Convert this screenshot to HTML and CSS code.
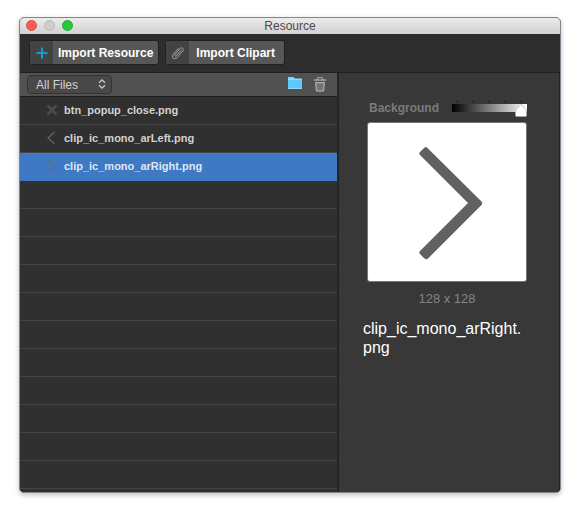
FILE: index.html
```html
<!DOCTYPE html>
<html lang="en">
<head>
<meta charset="utf-8">
<meta name="viewport" content="width=device-width, initial-scale=1">
<title>Resource</title>
<link rel="stylesheet" href="styles.css">
</head>
<body>
<main class="window">
  <header class="titlebar">
    <div class="lights">
      <button class="light close" type="button" aria-label="Close"></button>
      <button class="light minimize" type="button" aria-label="Minimize"></button>
      <button class="light expand" type="button" aria-label="Zoom"></button>
    </div>
    <h1 class="title">Resource</h1>
  </header>
  <div class="toolbar">
    <button class="import" type="button">
      <span class="import-icon"><svg width="12" height="12" viewBox="0 0 12 12" fill="none" stroke="#169bd0" stroke-width="2"><path d="M6 0.500V11.500M0.500 6H11.500"/></svg></span>
      <span class="import-label">Import Resource</span>
    </button>
    <button class="import" type="button">
      <span class="import-icon"><svg width="14" height="14" viewBox="0 0 14 14" fill="none" stroke="#a6a6a6" stroke-width="1" stroke-linecap="round"><path d="M10 4.500 5.200 9.800C4.200 10.800 3 9.600 3.900 8.600L9.200 2.600C10.800 0.800 13.300 2.900 11.800 4.900L6 11.600C3.300 14.300 0 11.500 2 8.600L7.500 2.200"/></svg></span>
      <span class="import-label">Import Clipart</span>
    </button>
  </div>
  <div class="content">
    <section class="files">
      <div class="filterbar">
        <div class="filter">
          <select aria-label="Filter files"><option>All Files</option></select>
          <svg class="arrows" width="8" height="10" viewBox="0 0 8 10" fill="none" stroke="#c8c8c8" stroke-width="1.300"><path d="M1 3.700 4 0.900 7 3.700M1 6.300 4 9.100 7 6.300"/></svg>
        </div>
        <div class="actions">
          <button class="action" type="button" aria-label="New folder">
            <svg width="16" height="14" viewBox="0 0 16 14"><path d="M1 0H6.500L8 1.500H15V12H1Z" fill="#7cd3ff"/><path d="M1 3H15V12H1Z" fill="#5fc8fa"/><path d="M1 2.500H15M1 11.500H15" stroke="#8edcff"/></svg>
          </button>
          <button class="action" type="button" aria-label="Delete">
            <svg width="14" height="15" viewBox="0 0 14 15" fill="none" stroke="#a8a8a8"><path d="M4.500 2.500V1Q4.500 0.500 5 0.500H9Q9.500 0.500 9.500 1V2.500"/><path d="M1 3H13" stroke-width="1.500"/><path d="M2 5H12L11 14.500H3Z" fill="#858585" stroke="none"/><path d="M2 5.500H12M2.500 5 3.500 14H10.500L11.500 5"/><path d="M5 7V13M7 7V13M9 7V13" stroke="#626262"/></svg>
          </button>
        </div>
      </div>
      <ul class="file-list">
        <li><button class="file" type="button">
          <svg class="file-icon" width="12" height="14" viewBox="0 0 12 14" fill="none" stroke="#4c4c4c" stroke-width="2.500"><path d="M1.500 2.500 10.500 11.500M10.500 2.500 1.500 11.500"/></svg>btn_popup_close.png</button></li>
        <li><button class="file" type="button">
          <svg class="file-icon" width="12" height="14" viewBox="0 0 12 14" fill="none" stroke="#666" stroke-width="1.200"><path d="M8.500 1 2 7 8.500 13"/></svg>clip_ic_mono_arLeft.png</button></li>
        <li><button class="file selected" type="button">
          <svg class="file-icon" width="12" height="14" viewBox="0 0 12 14" fill="none" stroke="#626b78" stroke-width="1.400"><path d="M2.500 1 9 7 2.500 13"/></svg>clip_ic_mono_arRight.png</button></li>
      </ul>
    </section>
    <aside class="preview">
      <div class="background-row">
        <label for="background">Background</label>
        <div class="slider">
          <div class="ticks" aria-hidden="true"><i></i><i></i><i></i><i></i><i></i></div>
          <input id="background" type="range" min="0" max="4" value="4">
          <svg class="thumb" width="12" height="13" viewBox="0 0 12 13"><path d="M6 0.500 11.500 6V11.500Q11.500 12.500 10.500 12.500H1.500Q0.500 12.500 0.500 11.500V6Z" fill="#fff" stroke="#aaa" stroke-width="0.700"/></svg>
        </div>
      </div>
      <div class="canvas">
        <svg viewBox="0 0 158 158" role="img" aria-label="Right arrow"><path d="M56.500 24.500 Q58 23.500 59.500 25 L113.500 78.500 Q115 80 113.500 82 L60 135.500 Q58 137 56.500 135.500 L52 131 Q50.500 129.500 52 128 L100 80 52 32 Q50.500 30.500 52 29Z" fill="#616161"/></svg>
      </div>
      <p class="dimensions">128 x 128</p>
      <h2 class="name">clip_ic_mono_arRight.<wbr>png</h2>
    </aside>
  </div>
</main>
</body>
</html>
```
FILE: styles.css
```css
* { box-sizing: border-box; }

body {
  margin: 0;
  padding: 17px 19px;
  min-height: 100vh;
  display: flex;
  background: #fff;
  color: #e0e0e0;
  font: 12px/16px "Liberation Sans", Arial, sans-serif;
}

button, select { font: inherit; color: inherit; }

.window {
  flex: 1;
  display: flex;
  flex-direction: column;
  overflow: hidden;
  border: 1px solid #7d8691;
  border-radius: 5px;
  background: #2d2d2d;
  box-shadow: 0 2px 5px rgba(0, 0, 0, .25);
}

.titlebar {
  display: grid;
  grid-template-columns: 1fr auto 1fr;
  align-items: center;
  height: 16px;
  padding: 0 6px;
  background: linear-gradient(#ececec, #d2d0d2);
}

.lights { display: flex; gap: 7px; padding-bottom: 1px; }

.light {
  width: 11px;
  height: 11px;
  padding: 0;
  border: 1px solid;
  border-radius: 50%;
}

.close { background: #ff5b54; border-color: #e2463f; }
.minimize { background: #cfcecf; border-color: #bbb; }
.expand { background: #28c840; border-color: #1dad2f; }

.title {
  margin: 0;
  color: #4a4a4a;
  font-size: 12px;
  font-weight: 400;
}

.toolbar {
  display: flex;
  gap: 6px;
  height: 38px;
  padding: 6px 9px 7px;
  background: #2d2d2d;
}

.import {
  display: flex;
  padding: 0;
  border: 1px solid #202020;
  border-radius: 3px;
  background: #575757;
  color: #fff;
  font-weight: 700;
}

.import-icon {
  display: grid;
  place-items: center;
  align-self: stretch;
  width: 23px;
  background: #434343;
}

.import-label {
  align-self: center;
  padding: 0 5px;
}

.import + .import .import-label { padding: 0 9px 0 7px; }

.content {
  flex: 1;
  display: grid;
  grid-template-columns: 1fr 223px;
  border-top: 1px solid #1f1f1f;
}

.files {
  display: flex;
  flex-direction: column;
}

.filterbar {
  display: flex;
  align-items: center;
  justify-content: space-between;
  height: 24px;
  padding: 0 10px 0 7px;
  border-bottom: 1px solid #1f1f1f;
  background: #515151;
}

.filter { position: relative; }

.filter select {
  appearance: none;
  display: block;
  width: 85px;
  height: 19px;
  padding: 0 8px;
  border: 1px solid #333;
  border-radius: 4px;
  background: #484848;
  color: #d4d4d4;
}

.arrows {
  position: absolute;
  top: 4px;
  right: 6px;
  pointer-events: none;
}

.actions { display: flex; align-items: center; gap: 10px; padding-bottom: 1px; }

.action {
  display: grid;
  padding: 0;
  border: 0;
  background: none;
}

.file-list {
  flex: 1;
  margin: 0;
  padding: 0;
  list-style: none;
  background: repeating-linear-gradient(#303030 0 27px, #454545 27px 28px);
}

.file {
  display: flex;
  align-items: center;
  gap: 6px;
  width: 100%;
  height: 28px;
  padding: 0 26px 2px;
  border: 0;
  background: none;
  font-size: 11px;
  font-weight: 700;
  color: #d2d2d2;
}

.selected {
  background: #3f79c3;
  color: #dce7f6;
}

.preview {
  padding: 26px 32px 20px 24px;
  border-left: 2px solid #242424;
  border-right: 1px solid #222;
  background: #383838;
}

.background-row {
  display: flex;
  justify-content: space-between;
  align-items: center;
  height: 18px;
  padding-left: 6px;
  color: #7b7b7b;
  font-weight: 700;
}

.slider {
  position: relative;
  width: 75px;
  height: 18px;
}

.ticks {
  display: flex;
  justify-content: space-between;
  height: 5px;
  padding: 1px 5px;
}

.ticks i { width: 1px; background: #202020; }

.slider input {
  appearance: none;
  display: block;
  width: 100%;
  height: 8px;
  margin: 0;
  background: linear-gradient(90deg, #000, #fff);
}

.slider input::-webkit-slider-thumb {
  appearance: none;
  width: 11px;
  height: 8px;
  background: transparent;
}

.thumb {
  position: absolute;
  right: 0;
  top: 5px;
  pointer-events: none;
}

.canvas {
  display: grid;
  margin: 5px 0 0 4px;
  border: 1px solid #777;
  border-radius: 3px;
  background: #fff;
}

.dimensions {
  margin: 9px 0 12px;
  padding-left: 4px;
  color: #858585;
  font-size: 13px;
  text-align: center;
}

.name {
  margin: 0;
  color: #fff;
  font-size: 16px;
  font-weight: 400;
  line-height: 19px;
}
```
